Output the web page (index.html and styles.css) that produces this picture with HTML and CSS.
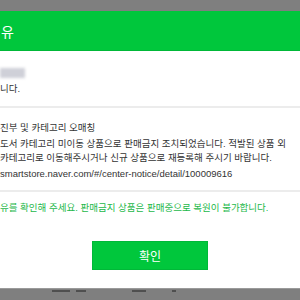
FILE: index.html
```html
<!DOCTYPE html>
<html lang="ko">

<head>
    <meta charset="UTF-8">
    <meta name="viewport" content="width=device-width, initial-scale=1.0">
    <title>판매금지 사유</title>
    <link rel="stylesheet" href="styles.css">
</head>

<body>

    <div class="modal">
        <div class="modal-head">
            <span class="head-title">유</span>
        </div>

        <div class="modal-body">
            <div class="blurred"></div>
            <p class="intro">니다.</p>

            <div class="reason-box">
                <p class="reason-title">진부 및 카테고리 오매칭</p>
                <p class="reason-text">도서 카테고리 미이동 상품으로 판매금지 조치되었습니다. 적발된 상품 외</p>
                <p class="reason-text">카테고리로 이동해주시거나 신규 상품으로 재등록해 주시기 바랍니다.</p>
                <p class="reason-link">smartstore.naver.com/#/center-notice/detail/100009616</p>
            </div>

            <p class="notice">유를 확인해 주세요. 판매금지 상품은 판매중으로 복원이 불가합니다.</p>

            <div class="actions">
                <button class="confirm-btn">확인</button>
            </div>
        </div>
    </div>

    <!-- page behind the dimmed overlay -->
    <div class="behind">
        <span class="mark m1"></span>
        <span class="mark m2"></span>
        <span class="mark m3"></span>
        <span class="mark m4"></span>
    </div>

</body>

</html>
```

FILE: styles.css
```css
body {
    margin: 0;
    padding: 0;
    width: 300px;
    height: 300px;
    overflow: hidden;
    background: #7f7f7f;
    font-family: "Liberation Sans", "Noto Sans CJK KR", sans-serif;
    color: #333;
}

p {
    margin: 0;
    white-space: nowrap;
}

/* Modal */
.modal {
    margin-top: 11px;
    background: #fff;
    height: 277px;
    display: flex;
    flex-direction: column;
}

.modal-head {
    height: 39px;
    background: #00c73c;
    border-bottom: 1px solid #00b838;
    display: flex;
    align-items: center;
    padding-left: 1px;
}

.head-title {
    color: #fff;
    font-size: 14px;
    font-family: "Noto Sans CJK KR", sans-serif;
}

.modal-body {
    flex: 1;
    display: flex;
    flex-direction: column;
    font-size: 9.5px;
}

.blurred {
    margin-top: 17px;
    width: 25px;
    height: 10px;
    background: #cfd0d8;
    filter: blur(1.5px);
}

.intro {
    margin-top: 4px;
    line-height: 14px;
}

/* Reason box */
.reason-box {
    margin-top: 10px;
    border-top: 2px solid #ececec;
    border-bottom: 2px solid #ececec;
    padding: 12px 0 9px;
    display: flex;
    flex-direction: column;
}

.reason-box p {
    line-height: 14px;
}

.reason-box .reason-title {
    line-height: 15px;
    margin-bottom: 2px;
}

.reason-box .reason-link {
    line-height: 15px;
    margin-top: 1px;
}

.notice {
    margin-top: 9px;
    line-height: 14px;
    color: #1cb84a;
}

.actions {
    display: flex;
    justify-content: center;
    margin-top: 26px;
}

.confirm-btn {
    width: 116px;
    height: 29px;
    background: #00c73c;
    border: 1px solid #00b838;
    color: #fff;
    font-size: 12px;
    font-family: "Noto Sans CJK KR", sans-serif;
    padding: 0;
}

/* Page behind the overlay */
.behind {
    height: 12px;
    border-top: 1px solid #9a9a9a;
    display: flex;
    gap: 6px;
    padding-left: 52px;
    padding-top: 1px;
}

.mark {
    height: 2px;
    background: #4f4f4f;
}

.m1 {
    width: 18px;
}

.m2 {
    width: 10px;
}

.m3 {
    width: 14px;
    margin-left: 40px;
}

.m4 {
    width: 4px;
    margin-left: 20px;
}
```
